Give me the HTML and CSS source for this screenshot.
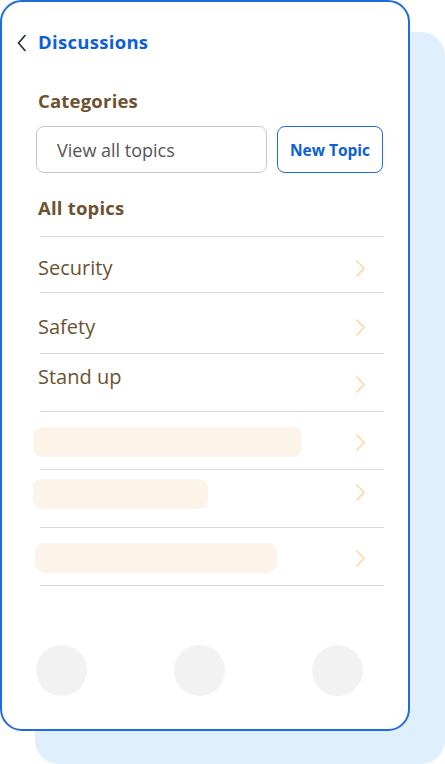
FILE: index.html
```html
<!DOCTYPE html>
<html>
<head>
<meta charset="utf-8">
<link rel="stylesheet" href="styles.css">
</head>
<body>
<div class="stage">
  <div class="backdrop"></div>
  <div class="card">
    <header class="topbar">
      <svg class="back" width="12" height="18" viewBox="0 0 12 18"><path d="M9 1.5 L2.5 9 L9 16.5" fill="none" stroke="#1f2a36" stroke-width="1.6" stroke-linecap="round" stroke-linejoin="round"/></svg>
      <h1 class="title">Discussions</h1>
    </header>
    <h2 class="section">Categories</h2>
    <div class="controls">
      <div class="select">View all topics</div>
      <button class="newtopic">New Topic</button>
    </div>
    <h2 class="section all">All topics</h2>
    <ul class="list">
      <li class="row r1"><span class="label">Security</span><svg class="chev" width="11" height="19" viewBox="0 0 11 19"><path d="M1.5 1.5 L9 9.5 L1.5 17.5" fill="none" stroke="#fdd7a1" stroke-width="1.6"/></svg></li>
      <li class="row r2"><span class="label">Safety</span><svg class="chev" width="11" height="19" viewBox="0 0 11 19"><path d="M1.5 1.5 L9 9.5 L1.5 17.5" fill="none" stroke="#fdd7a1" stroke-width="1.6"/></svg></li>
      <li class="row r3"><span class="label up">Stand up</span><svg class="chev" width="11" height="19" viewBox="0 0 11 19"><path d="M1.5 1.5 L9 9.5 L1.5 17.5" fill="none" stroke="#fdd7a1" stroke-width="1.6"/></svg></li>
      <li class="row r4"><span class="skel" style="width:269px"></span><svg class="chev" width="11" height="19" viewBox="0 0 11 19"><path d="M1.5 1.5 L9 9.5 L1.5 17.5" fill="none" stroke="#fdd7a1" stroke-width="1.6"/></svg></li>
      <li class="row r5"><span class="skel" style="width:175px"></span><svg class="chev" width="11" height="19" viewBox="0 0 11 19"><path d="M1.5 1.5 L9 9.5 L1.5 17.5" fill="none" stroke="#fdd7a1" stroke-width="1.6"/></svg></li>
      <li class="row r6"><span class="skel s3" style="width:242px"></span><svg class="chev" width="11" height="19" viewBox="0 0 11 19"><path d="M1.5 1.5 L9 9.5 L1.5 17.5" fill="none" stroke="#fdd7a1" stroke-width="1.6"/></svg></li>
    </ul>
    <nav class="dots">
      <span class="dot"></span>
      <span class="dot"></span>
      <span class="dot"></span>
    </nav>
  </div>
</div>
</body>
</html>
```
FILE: styles.css
```css
* { box-sizing: border-box; }
html, body { margin: 0; padding: 0; background: #ffffff; }
body { font-family: "Open Sans", "Roboto", sans-serif; width: 445px; height: 764px; overflow: hidden; }

.stage { position: relative; width: 445px; height: 764px; }

.backdrop {
  position: absolute;
  left: 35px; top: 32px;
  width: 410px; height: 732px;
  background: #e0effd;
  border-radius: 24px;
}

.card {
  position: relative;
  width: 410px; height: 731px;
  background: #ffffff;
  border: 2px solid #1d6cd9;
  border-radius: 22px;
  display: flex;
  flex-direction: column;
  padding: 0 24px 0 36px;
}

.topbar {
  display: flex;
  align-items: center;
  margin-top: 30px;
  margin-left: -22px;
  height: 20px;
}
.back { margin-right: 10px; margin-top: 1px; }
.title {
  margin: 0;
  font-family: "Open Sans", sans-serif;
  font-weight: 700;
  font-size: 18.5px;
  line-height: 20px;
  color: #0d5fd6;
  letter-spacing: 0.3px;
}

.section {
  margin: 0;
  font-family: "Open Sans", sans-serif;
  font-weight: 700;
  font-size: 18.5px;
  color: #6d5230;
  margin-top: 39px;
  line-height: 20px;
  letter-spacing: 0.2px;
}
.section.all { margin-top: 25px; }

.controls {
  display: flex;
  gap: 10px;
  margin-top: 15px;
  margin-left: -2px;
  height: 47px;
}
.select {
  width: 231px;
  height: 47px;
  border: 1px solid #c9c9c9;
  border-radius: 8px;
  padding-left: 20px;
  display: flex;
  align-items: center;
  font-family: "Open Sans", sans-serif;
  font-size: 18px;
  color: #555555;
}
.newtopic {
  width: 106px;
  height: 47px;
  border: 1px solid #1d6cd9;
  border-radius: 8px;
  background: #fff;
  font-family: "Open Sans", sans-serif;
  font-weight: 700;
  font-size: 15.5px;
  color: #0d5fd6;
  padding: 0;
}

.list {
  list-style: none;
  margin: 18px 0 0 0;
  padding: 0;
  border-top: 1px solid #d9d9d9;
  margin-left: 2px;
  width: 344px;
}
.row {
  display: flex;
  align-items: center;
  justify-content: space-between;
  border-bottom: 1px solid #d9d9d9;
  padding-right: 18px;
  position: relative;
}
.r1 { height: 56px; }
.r2 { height: 61px; }
.r3 { height: 58px; }
.r4 { height: 58px; }
.r5 { height: 58px; }
.r6 { height: 58px; }

.label {
  font-family: "Open Sans", sans-serif;
  font-size: 20px;
  line-height: 24px;
  color: #6d5230;
  margin-left: -2px;
}
.r1 .label { margin-top: 6px; }
.r2 .label { margin-top: 8px; }
.label.up { margin-top: -11px; }
.r1 .chev { margin-top: 8px; }
.r2 .chev { margin-top: 8px; }
.r3 .chev { margin-top: 3px; }
.r4 .chev { margin-top: 3px; }
.r5 .chev { margin-top: -13px; }
.r6 .chev { margin-top: 3px; }

.skel {
  height: 30px;
  border-radius: 9px;
  background: #fdf4e9;
  margin-left: -7px;
}
.r4 .skel { margin-top: 3px; }
.r5 .skel { margin-top: -9px; }
.r6 .skel { margin-left: -5px; margin-top: 3px; }

.dots {
  display: flex;
  justify-content: space-between;
  margin-top: 59px;
  width: 327px;
  margin-left: -2px;
}
.dot {
  width: 51px; height: 51px;
  border-radius: 50%;
  background: #f2f2f2;
}
```
